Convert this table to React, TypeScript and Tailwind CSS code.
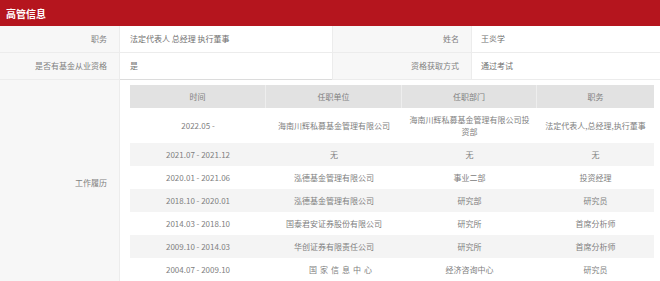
import React from "react";

const rows = [
  { t: "2022.05 -", u: "海南川辉私募基金管理有限公司", d: "海南川辉私募基金管理有限公司投资部", p: "法定代表人,总经理,执行董事", tall: true },
  { t: "2021.07 - 2021.12", u: "无", d: "无", p: "无" },
  { t: "2020.01 - 2021.06", u: "泓德基金管理有限公司", d: "事业二部", p: "投资经理" },
  { t: "2018.10 - 2020.01", u: "泓德基金管理有限公司", d: "研究部", p: "研究员" },
  { t: "2014.03 - 2018.10", u: "国泰君安证券股份有限公司", d: "研究所", p: "首席分析师" },
  { t: "2009.10 - 2014.03", u: "华创证券有限责任公司", d: "研究所", p: "首席分析师" },
  { t: "2004.07 - 2009.10", u: "国家信息中心", d: "经济咨询中心", p: "研究员", wide: true },
];

export default function App() {
  return (
    <div className="w-[660px] h-[281px] overflow-hidden bg-white font-['Noto_Sans_CJK_SC',sans-serif] text-[8px] text-[#808080]">
      <div className="h-[26px] bg-[#b5151e] flex items-center pl-[6px] text-white text-[10px] font-bold">
        高管信息
      </div>
      <div className="grid grid-cols-[120px_212px_140px_188px]">
        <div className="h-[27px] bg-[#f7f7f7] border-b border-r border-[#ececec] flex items-center justify-end pr-[12px]">职务</div>
        <div className="h-[27px] border-b border-[#ececec] flex items-center pl-[10px] text-[#707070]">法定代表人 总经理 执行董事</div>
        <div className="h-[27px] bg-[#f7f7f7] border-b border-l border-r border-[#ececec] flex items-center justify-end pr-[12px]">姓名</div>
        <div className="h-[27px] border-b border-[#ececec] flex items-center pl-[9px] text-[#707070]">王炎学</div>
        <div className="h-[27px] bg-[#f7f7f7] border-b border-r border-[#ececec] flex items-center justify-end pr-[12px]">是否有基金从业资格</div>
        <div className="h-[27px] border-b border-[#dcdcdc] flex items-center pl-[10px] text-[#707070]">是</div>
        <div className="h-[27px] bg-[#f7f7f7] border-b border-l border-r border-[#ececec] flex items-center justify-end pr-[12px]">资格获取方式</div>
        <div className="h-[27px] border-b border-[#ececec] flex items-center pl-[9px] text-[#707070]">通过考试</div>
      </div>
      <div className="flex">
        <div className="w-[120px] shrink-0 bg-[#f7f7f7] border-r border-[#ececec] flex items-center justify-end pr-[12px] h-[206px]">
          工作履历
        </div>
        <div className="pt-[5px] pl-[10px] pr-[5px]">
          <div className="w-[524px]">
            <div className="grid grid-cols-[136px_136px_135px_117px] h-[23px] bg-[#e2e2e2] text-[#808080]">
              <div className="flex items-center justify-center border-r border-[#eeeeee]">时间</div>
              <div className="flex items-center justify-center border-r border-[#eeeeee]">任职单位</div>
              <div className="flex items-center justify-center border-r border-[#eeeeee]">任职部门</div>
              <div className="flex items-center justify-center">职务</div>
            </div>
            {rows.map((r, i) => (
              <div
                key={i}
                className={`grid grid-cols-[136px_136px_135px_117px] ${r.tall ? "h-[35px]" : "h-[23px]"} ${i % 2 === 1 ? "bg-[#f4f4f4]" : "bg-white"}`}
              >
                <div className="flex items-center justify-center">{r.t}</div>
                <div className={`flex items-center justify-center text-center ${r.wide ? "tracking-[3px] pl-[16px]" : ""}`}>{r.u}</div>
                <div className="flex items-center justify-center text-center px-[7px] leading-[12px]">{r.d}</div>
                <div className="flex items-center justify-center text-center">{r.p}</div>
              </div>
            ))}
          </div>
        </div>
      </div>
    </div>
  );
}
